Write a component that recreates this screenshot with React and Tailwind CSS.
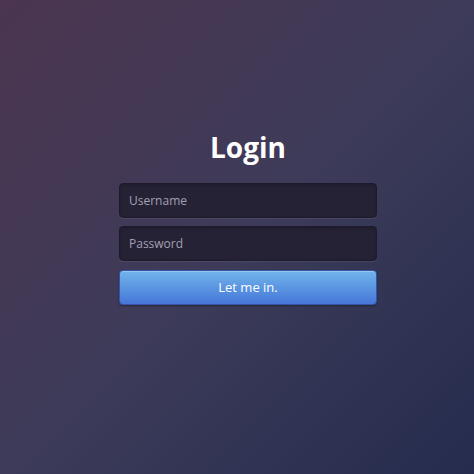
import React from 'react';

const Field = ({ type, placeholder }) => (
  <input
    type={type}
    placeholder={placeholder}
    className="w-full h-[35px] rounded-[4px] bg-[#262236] border border-[#1e1a2b] px-[9px] text-[12px] text-[#d0d0da] placeholder:text-[#a4a0b2] outline-none shadow-[0_1px_0_rgba(255,255,255,0.08),inset_0_1px_3px_rgba(0,0,0,0.25)]"
  />
);

const App = () => {
  return (
    <div
      className="h-screen w-full bg-linear-to-br from-[#4b3550] via-[#3d3b59] to-[#252c4e] flex justify-center pl-[22px] pt-[129px]"
      style={{ fontFamily: '"Open Sans", "Noto Sans", Arial, sans-serif' }}
    >
      <div className="w-[258px] flex flex-col">
        <h1 className="text-center text-white font-bold text-[28px] leading-[36px] mb-[18px]">Login</h1>
        <form className="flex flex-col gap-[8px]" onSubmit={(e) => e.preventDefault()}>
          <Field type="text" placeholder="Username" />
          <Field type="password" placeholder="Password" />
          <button
            type="submit"
            className="mt-px h-[35px] w-full rounded-[4px] border border-[#3556a8] bg-linear-to-b from-[#72b4ea] to-[#4776d8] text-white text-[13px] shadow-[0_1px_2px_rgba(0,0,0,0.35),inset_0_1px_0_rgba(255,255,255,0.25)]"
          >
            Let me in.
          </button>
        </form>
      </div>
    </div>
  );
};

export default App;
